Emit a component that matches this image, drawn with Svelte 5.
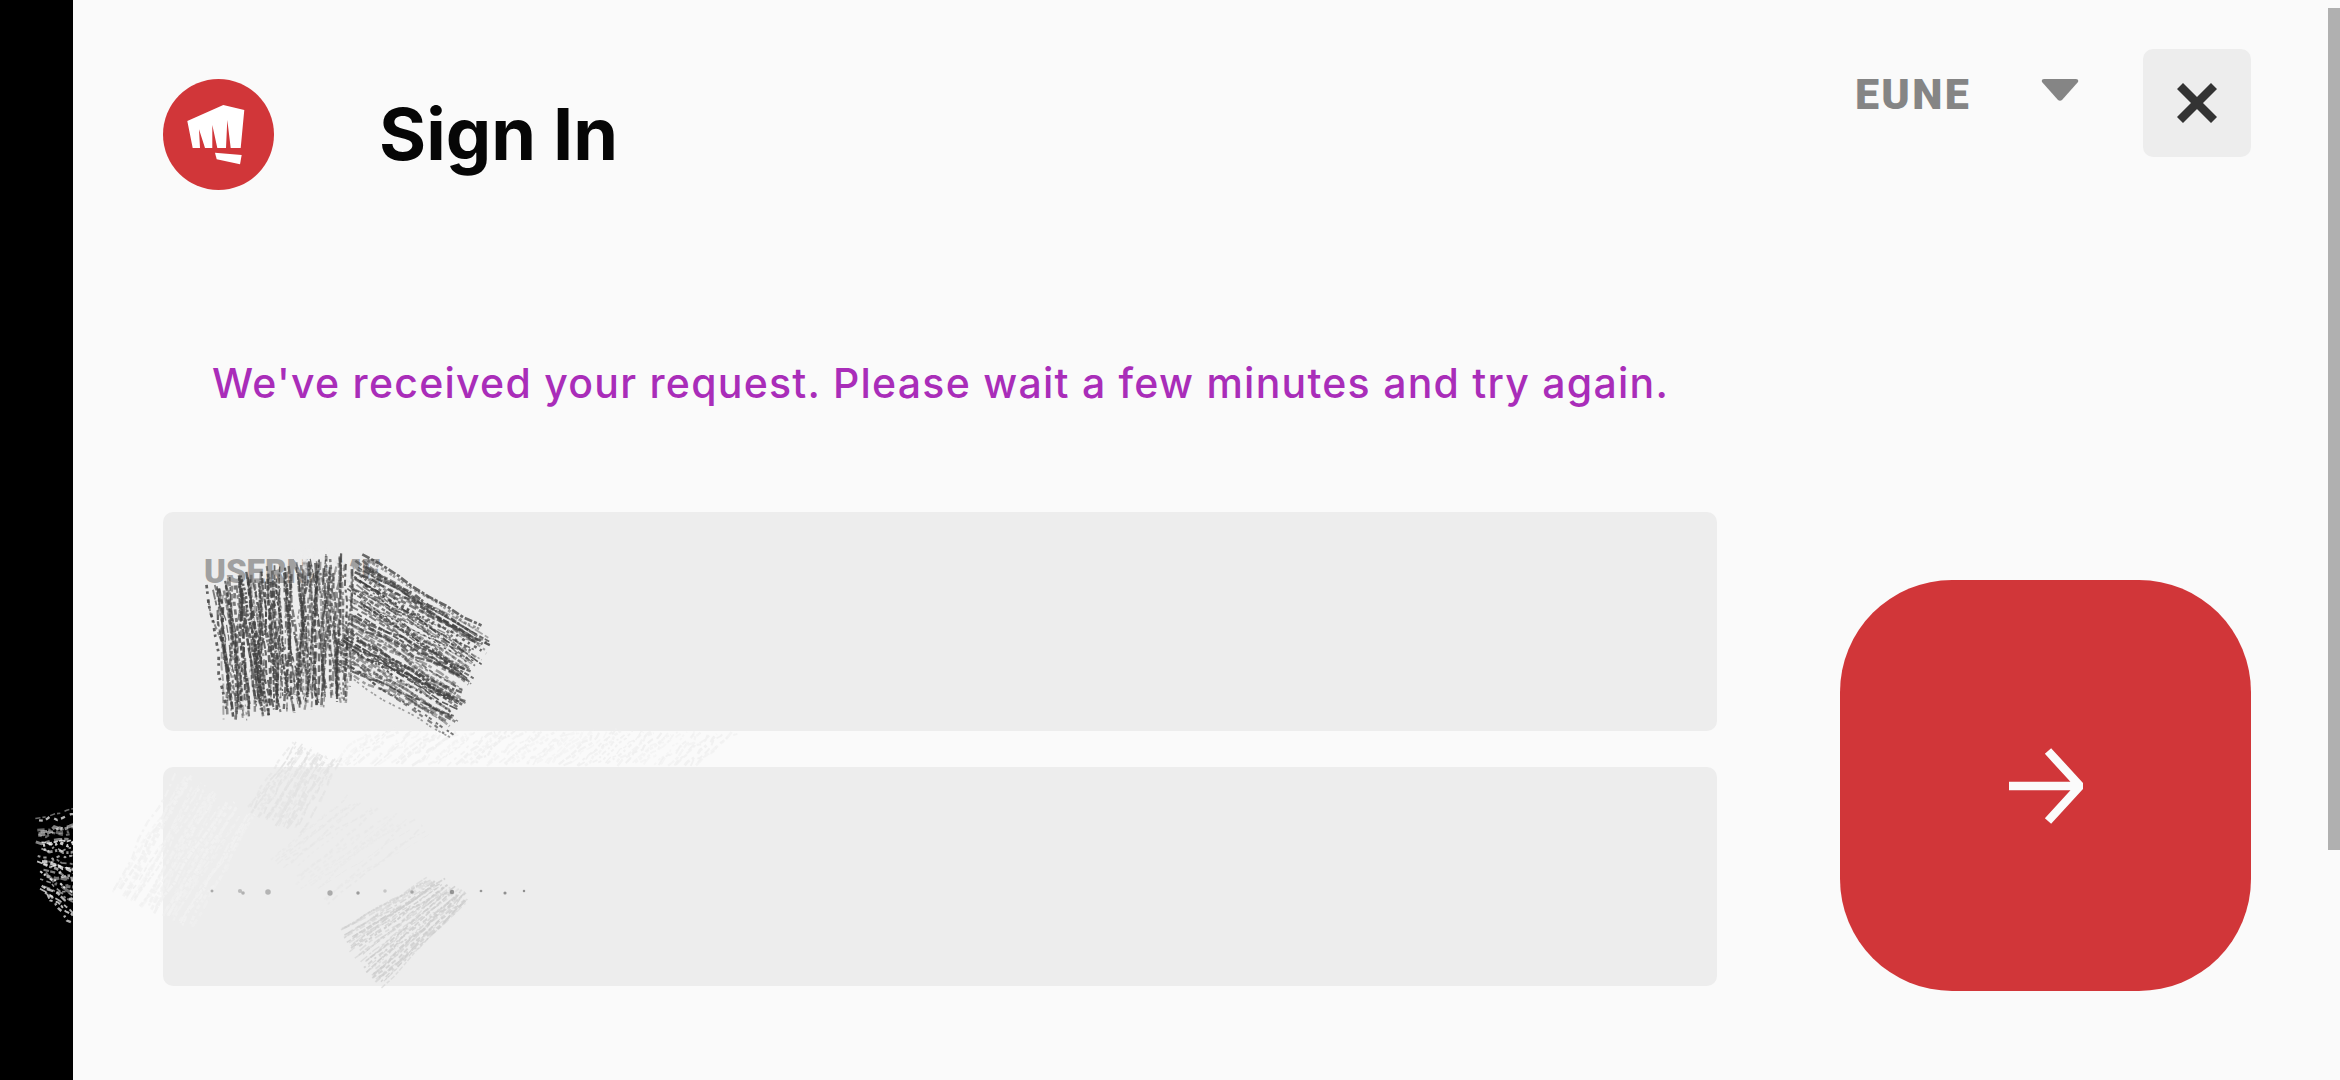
<script>
  // Small seeded generator so the pencil scrawl over the fields stays the same between runs.
  let seed = 41;
  function rnd(min = 0, max = 1) {
    seed = (seed * 16807) % 2147483647;
    return min + (seed / 2147483647) * (max - min);
  }

  const lerp = (p, q, t) => [p[0] + (q[0] - p[0]) * t, p[1] + (q[1] - p[1]) * t];

  // n wobbly strokes running between the edge a0-a1 and the edge b0-b1
  function hatch(a0, a1, b0, b1, n, color, opacity, width, jitter = 8) {
    const out = [];
    for (let i = 0; i < n; i++) {
      const t = i / (n - 1) + rnd(-0.01, 0.01);
      const s = lerp(a0, a1, t);
      const e = lerp(b0, b1, t);
      const sx = s[0] + rnd(-jitter, jitter);
      const sy = s[1] + rnd(-jitter, jitter);
      const ex = e[0] + rnd(-jitter, jitter);
      const ey = e[1] + rnd(-jitter, jitter);
      const wob = width * 1.1;
      let d = `M${sx.toFixed(1)} ${sy.toFixed(1)}`;
      for (let k = 1; k <= 7; k++) {
        const [x, y] = lerp([sx, sy], [ex, ey], k / 7);
        d += `L${(x + rnd(-wob, wob)).toFixed(1)} ${(y + rnd(-wob, wob)).toFixed(1)}`;
      }
      out.push({
        d,
        dash: `${rnd(2, 10).toFixed(1)} ${rnd(1, 4).toFixed(1)} ${rnd(2, 7).toFixed(1)} ${rnd(1, 6).toFixed(1)}`,
        color,
        opacity: (opacity * rnd(0.45, 1)).toFixed(2),
        width: (width * rnd(0.6, 1.4)).toFixed(2)
      });
    }
    return out;
  }

  const strokes = [
    // faint erased streaks, drawn first
    ...hatch([330, 764], [700, 764], [370, 732], [735, 732], 70, '#f0f0f0', 1, 2, 2),
    ...hatch([112, 890], [190, 925], [180, 775], [255, 820], 40, '#f1f1f1', 1, 2.2, 5),
    ...hatch([250, 810], [300, 830], [295, 745], [340, 760], 30, '#e3e3e3', 0.9, 1.8, 5),
    ...hatch([270, 850], [330, 900], [340, 800], [430, 830], 22, '#e6e6e6', 0.7, 1.5, 8),
    ...hatch([340, 930], [385, 985], [430, 880], [470, 900], 46, '#cdcdcd', 0.85, 1.6, 6),
    // rubbed-out end of the label
    ...hatch([290, 552], [330, 552], [330, 592], [385, 592], 36, '#ededed', 1, 3.5, 3),
    // the dark scrawl
    ...hatch([212, 590], [345, 562], [226, 712], [345, 695], 120, '#3f3f3f', 0.85, 2, 11),
    ...hatch([365, 558], [340, 665], [482, 632], [447, 732], 76, '#3f3f3f', 0.85, 2, 10)
  ];

  // white scratches that land on the black strip
  const railStrokes = hatch([38, 822], [44, 895], [80, 812], [80, 925], 26, '#f2f2f2', 0.9, 2.4, 4);

  // what is left of the password dots under the erased part
  const dots = [
    [212, 891], [240, 891], [243, 893], [268, 892], [330, 893], [358, 893],
    [385, 891], [412, 892], [452, 892], [481, 891], [505, 893], [524, 891]
  ].map(([x, y]) => ({ x, y, r: rnd(1.2, 2.8), o: rnd(0.3, 0.8) }));
</script>

<div class="page">
  <div class="rail"></div>

  <main class="sheet">
    <header class="top">
      <div class="logo">
        <svg viewBox="0 0 111 111" width="111" height="111" aria-hidden="true">
          <circle cx="55.5" cy="55.5" r="55.5" fill="#d13639" />
          <path
            fill="#fff"
            d="M24.3 42 60.3 26 81.3 31 77.7 69H67.7L64.3 41 63 69H54.3L49.3 46V69H42L36 50.3 37 69H29.7Z"
          />
          <path fill="#fff" d="M52 73.7 78.7 76 77 85.3 53.7 80.3Z" />
        </svg>
      </div>
      <h1>Sign In</h1>
      <div class="region">
        <span>EUNE</span>
        <svg class="caret" viewBox="0 0 38 22" width="38" height="22" aria-hidden="true">
          <path d="M3 0H35Q38 0 37 3L21 21Q19 22.500 17 21L1 3Q0 0 3 0Z" fill="#858585" />
        </svg>
      </div>
      <button class="close" aria-label="Close">
        <svg viewBox="0 0 40 40" width="40" height="40" aria-hidden="true">
          <path d="M3 3 37 37M37 3 3 37" stroke="#333" stroke-width="8.500" fill="none" />
        </svg>
      </button>
    </header>

    <p class="notice">We've received your request. Please wait a few minutes and try again.</p>

    <div class="form-row">
      <div class="fields">
        <label class="field">
          <span>USERNAME</span>
        </label>
        <div class="field"></div>
      </div>
      <button class="submit" aria-label="Sign in">
        <svg viewBox="0 0 74 76" width="74" height="76" aria-hidden="true">
          <path d="M0 38H70M39 3 71 38 39 73" stroke="#fbfbfb" stroke-width="8.500" fill="none" />
        </svg>
      </button>
    </div>
  </main>

  <div class="scrollbar"></div>

  <svg class="scrawl" viewBox="0 0 2340 1080" aria-hidden="true">
    <defs>
      <clipPath id="rail-clip"><rect x="0" y="0" width="73" height="1080" /></clipPath>
    </defs>
    {#each strokes as s}
      <path
        d={s.d}
        stroke={s.color}
        stroke-width={s.width}
        stroke-opacity={s.opacity}
        stroke-dasharray={s.dash}
        fill="none"
      />
    {/each}
    {#each dots as p}
      <circle cx={p.x} cy={p.y} r={p.r} fill="#777" fill-opacity={p.o} />
    {/each}
    <g clip-path="url(#rail-clip)">
      {#each railStrokes as s}
        <path
          d={s.d}
          stroke={s.color}
          stroke-width={s.width}
          stroke-opacity={s.opacity}
          stroke-dasharray={s.dash}
          fill="none"
        />
      {/each}
    </g>
  </svg>
</div>

<style>
  :global(body) {
    margin: 0;
    background: #fafafa;
  }

  .page {
    position: relative;
    display: flex;
    width: 2340px;
    height: 1080px;
    overflow: hidden;
    font-family: Inter, "Liberation Sans", sans-serif;
  }

  .rail {
    flex: 0 0 73px;
    background: #000;
  }

  .sheet {
    flex: 1;
    box-sizing: border-box;
    padding: 49px 89px 0 90px;
    background: #fafafa;
  }

  .top {
    display: flex;
    align-items: flex-start;
    height: 108px;
  }

  .logo {
    width: 111px;
    height: 111px;
    margin-top: 30px;
  }

  .logo svg {
    display: block;
  }

  h1 {
    margin: 40px 0 0 105px;
    font-size: 72px;
    line-height: 90px;
    font-weight: 700;
    color: #060606;
  }

  .region {
    display: flex;
    align-items: flex-start;
    margin-left: auto;
    margin-right: 64px;
    color: #858585;
    font-family: Roboto, sans-serif;
    font-size: 43px;
    font-weight: 900;
    letter-spacing: 2.3px;
    line-height: 50px;
  }

  .region span {
    margin-top: 20px;
  }

  .caret {
    display: block;
    margin: 30px 0 0 70px;
  }

  .close {
    display: flex;
    align-items: center;
    justify-content: center;
    width: 108px;
    height: 108px;
    padding: 0;
    border: none;
    border-radius: 10px;
    background: #ededed;
  }

  .notice {
    margin: 200px 0 0 49px;
    color: #a92db9;
    font-size: 41px;
    line-height: 52px;
    font-weight: 500;
    letter-spacing: 1.25px;
  }

  .form-row {
    display: flex;
    align-items: flex-start;
    justify-content: space-between;
    margin-top: 103px;
  }

  .fields {
    display: flex;
    flex-direction: column;
    gap: 36px;
    width: 1554px;
  }

  .field {
    box-sizing: border-box;
    display: block;
    height: 219px;
    padding: 40px 41px 0;
    border-radius: 10px;
    background: #ededed;
  }

  .field span {
    display: block;
    color: #a0a0a0;
    font-family: Roboto, sans-serif;
    font-size: 33px;
    font-weight: 900;
    line-height: 40px;
  }

  .submit {
    display: flex;
    align-items: center;
    justify-content: center;
    width: 411px;
    height: 411px;
    margin-top: 68px;
    padding: 0;
    border: none;
    border-radius: 112px;
    background: #d13639;
  }

  .scrollbar {
    position: absolute;
    top: 8px;
    right: 0;
    width: 12px;
    height: 842px;
    background: #b0b0b0;
  }

  .scrawl {
    position: absolute;
    inset: 0;
    width: 2340px;
    height: 1080px;
    pointer-events: none;
  }
</style>
